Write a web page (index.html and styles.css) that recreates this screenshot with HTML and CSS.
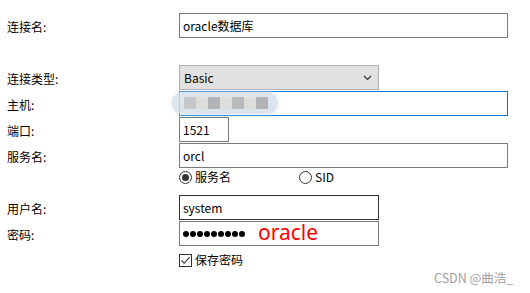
FILE: index.html
```html
<!DOCTYPE html>
<html lang="zh-CN">
<head>
    <meta charset="UTF-8">
    <title>连接</title>
    <link rel="stylesheet" href="styles.css">
</head>
<body>
    <div class="form">
        <div class="row">
            <span class="label">连接名:</span>
            <div class="box wide">oracle数据库</div>
        </div>

        <div class="row"></div>

        <div class="row">
            <span class="label">连接类型:</span>
            <div class="box select">Basic
                <svg class="arrow" width="9" height="6" viewBox="0 0 9 6"><path d="M1 1 L4.5 4.5 L8 1" fill="none" stroke="#333" stroke-width="1.2"/></svg>
            </div>
        </div>

        <div class="row">
            <span class="label">主机:</span>
            <div class="box wide focus">
                <div class="blur">
                    <i class="c1"></i><i class="c2"></i><i class="c3"></i><i class="c2"></i><i class="c5"></i><i class="c2"></i><i class="c3"></i>
                </div>
            </div>
        </div>

        <div class="row">
            <span class="label">端口:</span>
            <div class="box port">1521</div>
        </div>

        <div class="row">
            <span class="label">服务名:</span>
            <div class="box wide">orcl</div>
        </div>

        <div class="row radios">
            <span class="label"></span>
            <div class="radio-group">
                <span class="opt first"><span class="radio checked"></span>服务名</span>
                <span class="opt"><span class="radio"></span>SID</span>
            </div>
        </div>

        <div class="row">
            <span class="label">用户名:</span>
            <div class="box mid hover">system</div>
        </div>

        <div class="row">
            <span class="label">密码:</span>
            <div class="box mid pass">
                <span class="dots"><i></i><i></i><i></i><i></i><i></i><i></i><i></i><i></i><i></i></span>
                <span class="note">oracle</span>
            </div>
        </div>

        <div class="row">
            <span class="label"></span>
            <span class="opt">
                <span class="check">
                    <svg width="11" height="11" viewBox="0 0 11 11"><path d="M1.5 5.5 L4.2 8.3 L9.6 2.2" fill="none" stroke="#333" stroke-width="1.1"/></svg>
                </span>保存密码
            </span>
        </div>
    </div>

    <div class="mark">CSDN @曲浩_</div>
</body>
</html>
```

FILE: styles.css
```css
body {
    margin: 0;
    padding: 13px 0 0 7px;
    background-color: #fff;
    font-family: "Noto Sans CJK SC", "Noto Sans", sans-serif;
    font-size: 12px;
    color: #000;
}

.form {
    display: flex;
    flex-direction: column;
}

.row {
    display: grid;
    grid-template-columns: 172px 1fr;
    align-items: center;
    height: 26px;
}

.label {
    line-height: 25px;
}

.box {
    box-sizing: border-box;
    height: 25px;
    border: 1px solid #7a7a7a;
    padding: 0 3px;
    line-height: 23px;
    background: #fff;
    position: relative;
    align-self: start;
}

.wide {
    width: 329px;
}

.mid {
    width: 200px;
}

.port {
    width: 50px;
}

.select {
    width: 200px;
    background: #e1e1e1;
    border-color: #adadad;
    padding-left: 4px;
}

.select .arrow {
    position: absolute;
    right: 6px;
    top: 9px;
}

.focus {
    border-color: #0078d7;
}

.hover {
    border-color: #333;
}

/* blurred host value */
.blur {
    position: absolute;
    left: -8px;
    top: 0;
    width: 106px;
    height: 22px;
    border-radius: 11px;
    background: rgba(214, 224, 234, 0.85);
    box-shadow: 0 0 4px rgba(214, 224, 234, 0.9);
    display: flex;
    align-items: center;
    padding-left: 12px;
    box-sizing: border-box;
}

.blur i {
    display: block;
    width: 12px;
    height: 12px;
}

.blur .c1 { background: #c5c7c9; }
.blur .c2 { background: #dfddd9; }
.blur .c3 { background: #b1b3b5; }
.blur .c5 { background: #b9babb; }

.radios {
    align-items: start;
    height: 26px;
}

.radio-group {
    display: flex;
}

.opt {
    display: flex;
    align-items: center;
    line-height: 16px;
}

.opt.first {
    width: 120px;
}

.radio {
    box-sizing: border-box;
    width: 13px;
    height: 13px;
    border: 1px solid #333;
    border-radius: 50%;
    margin-right: 3px;
    display: flex;
    align-items: center;
    justify-content: center;
}

.radio.checked::after {
    content: "";
    width: 7px;
    height: 7px;
    border-radius: 50%;
    background: #333;
}

.check {
    box-sizing: border-box;
    width: 13px;
    height: 13px;
    border: 1px solid #333;
    margin-right: 3px;
    display: flex;
    align-items: center;
    justify-content: center;
}

.pass {
    display: flex;
    align-items: center;
}

.dots {
    display: flex;
    gap: 1px;
}

.dots i {
    display: block;
    width: 6px;
    height: 6px;
    border-radius: 50%;
    background: #000;
}

.note {
    color: #ff0000;
    font-family: "Noto Sans", sans-serif;
    font-size: 21px;
    line-height: 21px;
    margin-left: 13px;
    margin-top: -2px;
}

.mark {
    position: absolute;
    left: 434px;
    top: 270px;
    color: #a0a0a0;
    font-size: 12.5px;
    line-height: 16px;
}
```
